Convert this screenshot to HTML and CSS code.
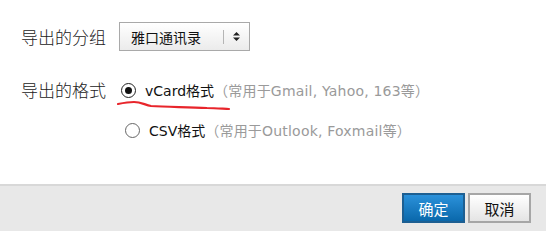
FILE: index.html
```html
<!DOCTYPE html>
<html lang="zh-CN">
<head>
    <meta charset="UTF-8">
    <title>导出联系人</title>
    <link rel="stylesheet" href="styles.css">
</head>
<body>
    <div class="dialog">
        <div class="content">
            <div class="row">
                <span class="label">导出的分组</span>
                <div class="select">
                    <span class="select-text">雅口通讯录</span>
                    <span class="select-sep"></span>
                    <span class="select-arrow">
                        <svg width="7" height="9" viewBox="0 0 7 9"><path d="M3.5 0 L7 3.5 H0 Z M3.5 9 L0 5.5 H7 Z" fill="#222"/></svg>
                    </span>
                </div>
            </div>

            <div class="row format-row">
                <span class="label">导出的格式</span>
                <div class="options">
                    <label class="option">
                        <span class="radio checked"></span>
                        <span class="name">vCard格式</span><span class="hint">（常用于Gmail, Yahoo, 163等）</span>
                    </label>
                    <label class="option second">
                        <span class="radio"></span>
                        <span class="name">CSV格式</span><span class="hint">（常用于Outlook, Foxmail等）</span>
                    </label>
                    <!-- hand drawn red mark under vCard -->
                    <svg class="scribble" width="120" height="14" viewBox="0 0 120 14">
                        <path d="M1 5 C6 4 12 3 17 3 C24 3 28 6 34 7 C50 8 70 8 90 9 C100 9 108 10 112 10" stroke="#e8252b" stroke-width="2.2" fill="none" stroke-linecap="round"/>
                    </svg>
                </div>
            </div>
        </div>

        <div class="footer">
            <button class="btn btn-primary">确定</button>
            <button class="btn">取消</button>
        </div>
    </div>
</body>
</html>
```

FILE: styles.css
```css
* {
    margin: 0;
    padding: 0;
    box-sizing: border-box;
}

body {
    font-family: "DejaVu Sans", "Noto Sans CJK SC", sans-serif;
    background: #fff;
    width: 546px;
    height: 231px;
    overflow: hidden;
}

.dialog {
    width: 546px;
    height: 231px;
    display: flex;
    flex-direction: column;
}

.content {
    height: 184px;
    padding: 22px 0 0 21px;
}

.row {
    display: flex;
    align-items: center;
    height: 29px;
}

.label {
    width: 98px;
    font-family: "Noto Sans CJK SC", sans-serif;
    font-size: 17px;
    font-weight: 300;
    color: #222;
}

.select {
    width: 131px;
    height: 29px;
    border: 1px solid #a9a9a9;
    background: linear-gradient(#ffffff, #ebebeb);
    display: flex;
    align-items: center;
    padding-left: 11px;
}

.select-text {
    font-size: 14px;
    color: #111;
    width: 92px;
}

.select-sep {
    width: 1px;
    height: 14px;
    background: #b5b5b5;
}

.select-arrow {
    display: flex;
    margin-left: 9px;
}

.format-row {
    margin-top: 27px;
    align-items: flex-start;
    height: auto;
}

.format-row .label {
    line-height: 24px;
}

.options {
    position: relative;
    display: flex;
    flex-direction: column;
    gap: 16px;
}

.option {
    display: flex;
    align-items: center;
    height: 24px;
    font-size: 14px;
    padding-left: 2px;
}

.option.second {
    padding-left: 6px;
}

.radio {
    width: 15px;
    height: 15px;
    border: 1px solid #666;
    border-radius: 50%;
    margin-right: 9px;
    display: flex;
    align-items: center;
    justify-content: center;
    background: #fff;
}

.radio.checked {
    border: 1.5px solid #222;
}

.radio.checked::after {
    content: "";
    width: 7px;
    height: 7px;
    border-radius: 50%;
    background: #111;
}

.name {
    color: #111;
}

.hint {
    color: #9a9a9a;
    letter-spacing: 0.2px;
}

.scribble {
    position: absolute;
    left: -2px;
    top: 21px;
}

.footer {
    flex: 1;
    background: #e8e8e8;
    border-top: 2px solid #d8d8d8;
    display: flex;
    justify-content: flex-end;
    align-items: flex-start;
    gap: 3px;
    padding: 7px 15px 0 0;
}

.btn {
    width: 63px;
    height: 30px;
    font-family: "Noto Sans CJK SC", sans-serif;
    font-size: 15px;
    color: #111;
    border: 2px solid #a6a6a6;
    background: linear-gradient(#ffffff, #e4e4e4);
    cursor: pointer;
}

.btn-primary {
    color: #fff;
    border-color: #1d5f92;
    background: linear-gradient(#2b91da, #0a68ab);
}
```
